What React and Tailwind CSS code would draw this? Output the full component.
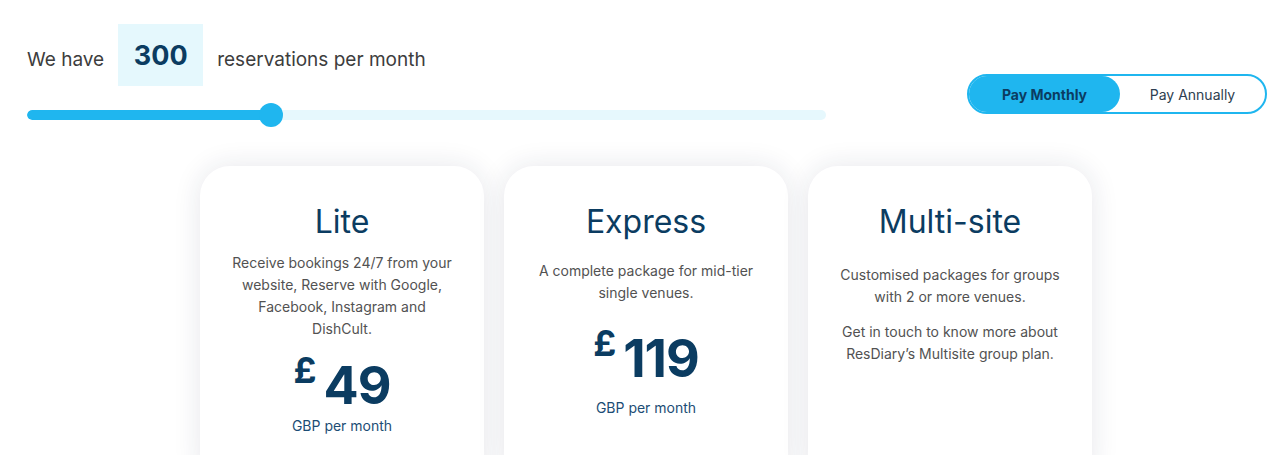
import React, { useState } from 'react';

const plans = [
  {
    name: 'Lite',
    descMt: 'mt-[10px]',
    desc: ['Receive bookings 24/7 from your website, Reserve with Google, Facebook, Instagram and DishCult.'],
    price: '49',
    priceMt: 'mt-[12px]',
    gbpMt: 'mt-[3px]',
  },
  {
    name: 'Express',
    descMt: 'mt-[18px]',
    desc: ['A complete package for mid-tier single venues.'],
    price: '119',
    priceMt: 'mt-[21px]',
    gbpMt: 'mt-[12px]',
  },
  {
    name: 'Multi-site',
    descMt: 'mt-[22px]',
    desc: [
      'Customised packages for groups with 2 or more venues.',
      'Get in touch to know more about ResDiary\u2019s Multisite group plan.',
    ],
  },
];

const PlanCard = ({ plan }) => (
  <div className="w-[284px] h-[320px] shrink-0 rounded-[30px] bg-white shadow-[0_0_28px_rgba(30,40,70,0.11)] px-[30px] pt-[36px] flex flex-col items-center text-center">
    <h2 className="text-[32px] leading-[40px] text-[#0b3c61]">{plan.name}</h2>
    <div className={`${plan.descMt} flex flex-col gap-[13px]`}>
      {plan.desc.map((d, i) => (
        <p key={i} className="text-[14px] leading-[22px] text-[#525252]">{d}</p>
      ))}
    </div>
    {plan.price && (
      <>
        <div className={`${plan.priceMt} flex items-start gap-[7px] text-[#0b3c61] font-bold`}>
          <span className="text-[36px] leading-none">£</span>
          <span className="text-[52px] leading-none mt-[8px] tracking-[-1px]">{plan.price}</span>
        </div>
        <p className={`${plan.gbpMt} text-[14px] leading-[22px] text-[#1c4d75]`}>GBP per month</p>
      </>
    )}
  </div>
);

export default function App() {
  const [monthly, setMonthly] = useState(true);
  const value = 300;
  const pct = 30.6;

  return (
    <div className="w-[1283px] h-[455px] overflow-hidden bg-white" style={{ fontFamily: 'Inter, "Noto Sans", sans-serif' }}>
      {/* Top controls */}
      <div className="flex justify-between pl-[27px] pr-[16px] pt-6">
        <div className="w-[799px]">
          <div className="flex items-center h-[62px] text-[19px] text-[#3d3d3d]">
            <span className="mt-[11px]">We have</span>
            <div className="ml-[14px] w-[85px] h-[62px] pt-[3px] bg-[#e5f8fd] flex items-center justify-center text-[27px] font-bold text-[#0b3c61]">
              {value}
            </div>
            <span className="ml-[14px] mt-[11px]">reservations per month</span>
          </div>
          <div className="relative mt-[17px] h-[24px] flex items-center">
            <div className="w-full h-[10px] rounded-full bg-[#e6f8fd] overflow-hidden">
              <div className="h-full bg-[#1fb6ef] rounded-full" style={{ width: `${pct}%` }} />
            </div>
            <div
              className="absolute top-0 w-[24px] h-[24px] rounded-full bg-[#1fb6ef] -translate-x-1/2"
              style={{ left: `${pct}%` }}
            />
          </div>
        </div>

        <div className="mt-[50px] w-[300px] h-[40px] rounded-full border-2 border-[#1fb6ef] flex items-center text-[14px]">
          <button
            onClick={() => setMonthly(true)}
            className={`w-[151px] h-full rounded-full ${monthly ? 'bg-[#1fb6ef] font-bold text-[#0b3c61]' : 'text-[#2e3e50]'}`}
          >
            Pay Monthly
          </button>
          <button
            onClick={() => setMonthly(false)}
            className={`flex-1 h-full rounded-full ${!monthly ? 'bg-[#1fb6ef] font-bold text-[#0b3c61]' : 'text-[#2e3e50]'}`}
          >
            Pay Annually
          </button>
        </div>
      </div>

      {/* Plan cards */}
      <div className="flex gap-5 pl-[200px] mt-[39px]">
        {plans.map((p) => (
          <PlanCard key={p.name} plan={p} />
        ))}
      </div>
    </div>
  );
}
